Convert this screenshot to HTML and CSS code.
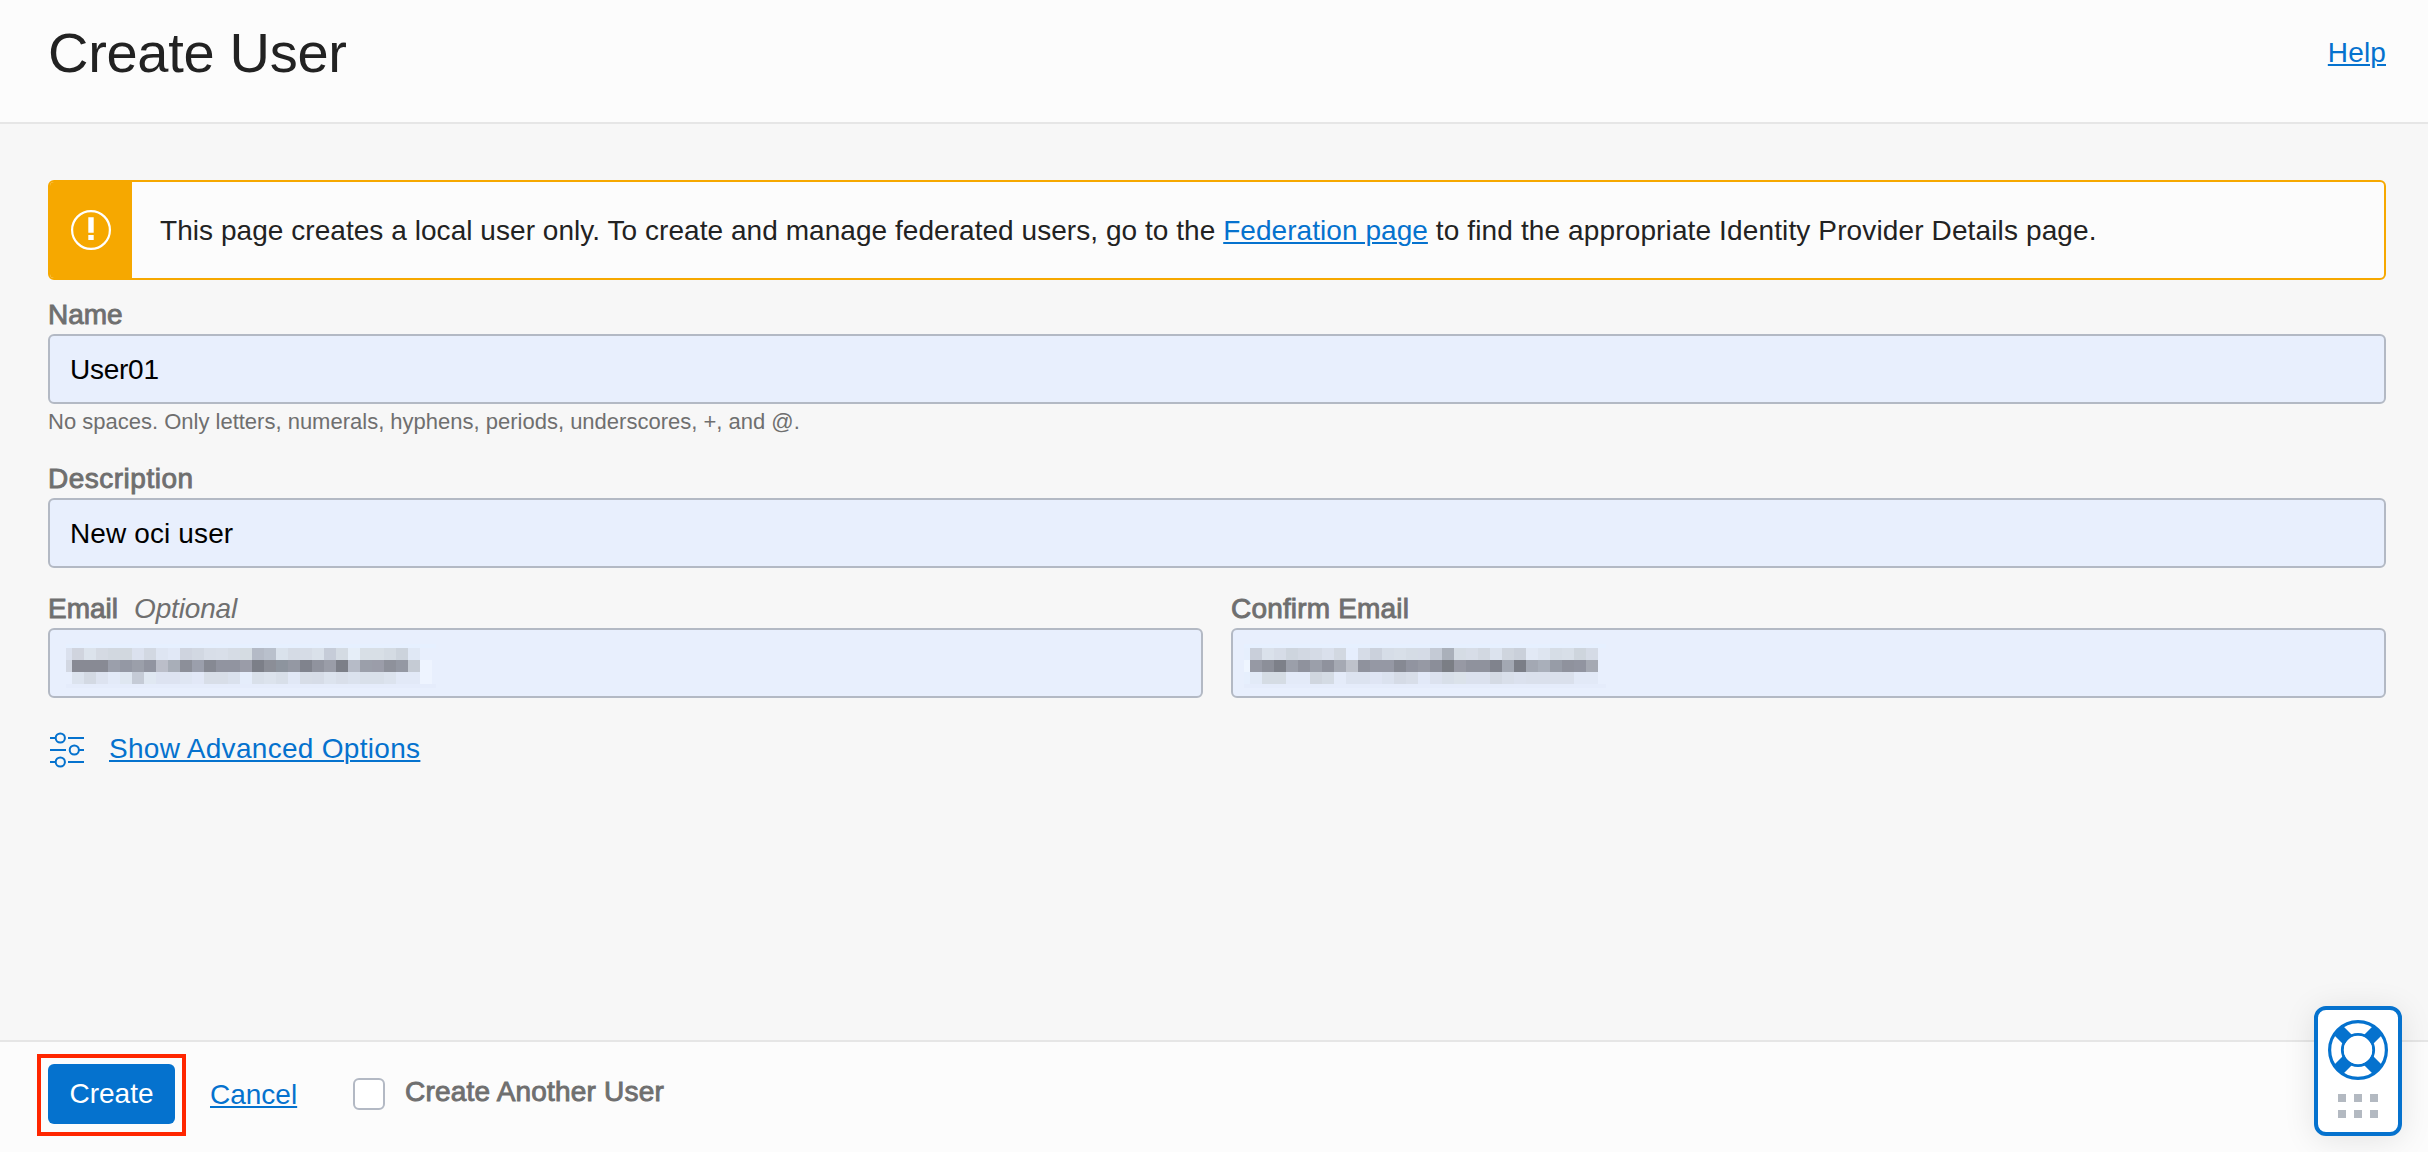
FILE: index.html
```html
<!DOCTYPE html>
<html lang="en">
<head>
<meta charset="utf-8">
<title>Create User</title>
<link rel="stylesheet" href="styles.css">
</head>
<body>
<div class="page">
  <header class="header">
    <h1 class="title">Create User</h1>
    <a class="link help-link" href="#">Help</a>
  </header>

  <main class="content">
    <div class="alert">
      <div class="alert-icon">
        <svg width="42" height="42" viewBox="0 0 42 42"><circle cx="21" cy="21" r="18.9" fill="none" stroke="#fff" stroke-width="2.2"/><path d="M18.300 8.300h5.400v15.400h-5.400zM18.300 26h5.400v5h-5.400z" fill="#fff"/></svg>
      </div>
      <p class="alert-text"><span class="alert-before">This page creates a local user only. To create and manage federated users, go to the </span><a class="link alert-link" href="#">Federation page</a><span class="alert-after"> to find the appropriate Identity Provider Details page.</span></p>
    </div>

    <div class="field">
      <label class="label"><span class="l-name">Name</span></label>
      <div class="input"><span class="v-name">User01</span></div>
      <p class="hint">No spaces. Only letters, numerals, hyphens, periods, underscores, +, and @.</p>
    </div>

    <div class="field field-description">
      <label class="label"><span class="l-desc">Description</span></label>
      <div class="input"><span class="v-desc">New oci user</span></div>
    </div>

    <div class="row">
      <div class="field">
        <label class="label"><span class="l-email">Email</span><em class="optional">Optional</em></label>
        <div class="input input-masked"><svg class="mask" width="370" height="44" data-mask="email"></svg></div>
      </div>
      <div class="field">
        <label class="label"><span class="l-confirm">Confirm Email</span></label>
        <div class="input input-masked confirm"><svg class="mask" width="362" height="44" data-mask="confirm"></svg></div>
      </div>
    </div>

    <div class="advanced">
      <svg width="36" height="36" viewBox="0 0 36 36" fill="none" stroke="#0572ce" stroke-width="2"><path d="M1 6h5M19 6h16M1 18h16M30 18h5M1 30h5M19 30h16"/><circle cx="11.3" cy="6" r="4.6"/><circle cx="25.3" cy="18" r="4.6"/><circle cx="11.3" cy="30" r="4.6"/></svg>
      <a class="link" href="#">Show Advanced Options</a>
    </div>
  </main>

  <footer class="footer">
    <div class="highlight"><button class="create">Create</button></div>
    <a class="link cancel" href="#">Cancel</a>
    <span class="checkbox"></span>
    <span class="another">Create Another User</span>
  </footer>
</div>

<div class="support">
  <svg width="60" height="60" viewBox="0 0 60 60">
    <g fill="none" stroke="#0572ce">
      <path d="M10.500 10.500L20 20M40 20L49.500 10.500M10.500 49.500L20 40M40 40L49.500 49.500" stroke-width="12.800"/>
      <circle cx="30" cy="30" r="28.400" stroke-width="3.200"/>
      <circle cx="30" cy="30" r="15.600" stroke-width="3"/>
    </g>
    <circle cx="30" cy="30" r="14.200" fill="#fff"/>
  </svg>
  <div class="dots"><i></i><i></i><i></i><i></i><i></i><i></i></div>
</div>
<script src="mask.js"></script>
</body>
</html>
```
FILE: styles.css
```css
* { box-sizing: border-box; }

body {
  margin: 0;
  font-family: "Liberation Sans", Arial, sans-serif;
  font-size: 28px;
  line-height: 32px;
  color: #222;
  background: #f7f7f7;
}

h1, p { margin: 0; font-weight: 400; }

.page { display: flex; flex-direction: column; height: 1152px; }

.header {
  display: flex;
  justify-content: space-between;
  height: 124px;
  padding: 0 42px 0 48px;
  background: #fcfcfc;
  border-bottom: 2px solid #e6e6e6;
}

.title { padding-top: 21px; font-size: 56px; line-height: 64px; letter-spacing: -0.3px; }

.link {
  color: #0572ce;
  text-decoration: underline;
  text-decoration-thickness: 2px;
  text-underline-offset: 2px;
}

.help-link { padding-top: 37px; letter-spacing: 0.15px; }

.content { flex: 1; padding: 56px 42px 0 48px; }

.alert {
  display: flex;
  height: 100px;
  border: 2px solid #f6a800;
  border-radius: 6px;
  background: #fcfcfc;
  overflow: hidden;
}

.alert-icon {
  display: flex;
  align-items: center;
  justify-content: center;
  width: 82px;
  background: #f6a800;
}

.alert-text { padding: 33px 0 0 28px; white-space: pre; }
.alert-before, .alert-link { letter-spacing: 0.05px; }
.alert-after { letter-spacing: 0.13px; }

.field { display: flex; flex-direction: column; }

.label {
  height: 54px;
  padding-top: 19px;
  color: #6f6f6f;
  white-space: nowrap;
}

.label > span, .another { -webkit-text-stroke: 0.9px #6f6f6f; }
.l-desc { letter-spacing: 0.5px; }
.l-confirm { letter-spacing: 0.18px; }

.optional { margin-left: 16px; letter-spacing: -0.15px; }

.input {
  display: flex;
  align-items: center;
  height: 70px;
  padding: 2px 0 0 20px;
  border: 2px solid #b3b9c4;
  border-radius: 6px;
  background: #e8effd;
  color: #000;
}

.v-name { letter-spacing: -0.25px; }
.v-desc { letter-spacing: 0.12px; }

.input-masked { padding-left: 16px; }
.confirm { padding-left: 11px; }

.mask { display: block; margin-top: 4px; }

.hint { padding-top: 5px; font-size: 22px; line-height: 25px; color: #6f6f6f; }

.field-description { margin-top: 10px; }

.row { display: grid; grid-template-columns: 1fr 1fr; gap: 28px; margin-top: 6px; }

.advanced { display: flex; align-items: center; gap: 24px; margin-top: 34px; padding-left: 1px; }
.advanced .link { margin-bottom: 2px; letter-spacing: 0.3px; }

.footer {
  display: flex;
  height: 112px;
  padding: 12px 0 0 37px;
  border-top: 2px solid #e6e6e6;
  background: #fcfcfc;
}

.highlight {
  display: flex;
  align-items: center;
  justify-content: center;
  width: 149px;
  height: 82px;
  padding-bottom: 2px;
  border: 4px solid #ff2600;
}

.create {
  width: 127px;
  height: 60px;
  padding: 0;
  border: 0;
  border-radius: 6px;
  background: #0572ce;
  color: #fff;
  font: inherit;
}

.cancel { width: 87px; margin: 25px 0 0 24px; }

.checkbox {
  width: 32px;
  height: 32px;
  margin: 24px 0 0 56px;
  border: 2px solid #b3b9c4;
  border-radius: 6px;
  background: #fff;
}

.another { margin: 22px 0 0 20px; color: #6f6f6f; letter-spacing: 0.2px; }

.support {
  position: absolute;
  left: 2314px;
  top: 1006px;
  width: 88px;
  height: 130px;
  padding-top: 10px;
  border: 4px solid #0572ce;
  border-radius: 12px;
  background: #fff;
  box-shadow: 0 4px 32px rgba(0, 0, 0, 0.1);
}

.support svg { display: block; margin: 0 auto; }

.dots { display: grid; grid-template-columns: repeat(3, 8px); gap: 8px; justify-content: center; margin-top: 14px; }
.dots i { height: 8px; background: #b3b9c1; }
```
FILE: mask.js
```js
// Tones of the redacted addresses: three rows of 12px blocks after a narrow lead-in.
const masks = {
  email: [
    "dbe1ee d0d4de dce3ec d5dae3 d2d8e0 d2d8df dbe1ee d2d8e2 dee5f2 e1e8f6 cfd4df d2d8e2 d8dee8 d9dfe9 d6dce5 d5dce2 b4bac6 b9c0cc dae2ec d5dbe5 d6dce6 dae1ea c6ccd8 d4dbe3 e6eef8 d8dfe6 d8dfe6 d4dbe3 ccd3dc e0e8f5",
    "d2d7e2 888a94 888a94 888a94 9b9fab 9498a4 9b9faa 9194a0 bbbec9 a8aeb8 8c8f99 9b9fac 868993 9194a0 9194a0 9a9ca8 7c7f88 8b8e97 8d949e 9498a3 80838d 90939e 9a9da8 7c7f88 b6bbc7 9b9faa 9b9da9 8e919b 9498a3 c5cbd4 eef4ff",
    "e8effd dce3ee d3d9e3 dde3f0 e3eaf8 dfe7f1 c5cbd6 e0e8f2 dde3f1 dde3f1 dfe6f3 e2e8f7 d8dee8 d8dee8 dae1ed e5edfb d9e0ea dce3ed d8dfe9 e1e8f6 d7dde7 d6dce7 dce3ee d9dfea dbe2ee d9e0ea d9e0ea dce3ee e2e9f7 e2e9f7 eef4ff"
  ],
  confirm: [
    "e6effd c9cfda dae1eb d6dce7 ced5de d2d8e2 d5dbe6 dae0ec d2d8e1 e6eefd d6dce7 cbd1dc d6dde7 d8dfe8 d5dce5 d5dbe6 c4cad5 aab0ba d5dce4 d7dde7 d2d8e1 dce3ee cfd5de cad0da e2e9f5 dee5f0 d6dde6 d8dfe8 ced5dd d5dbe6",
    "eef5ff 9699a4 8c8f99 7d8089 9b9faa 8f929d 9b9faa 8f929d a5a9b3 bec2cb 8f929d 9598a4 9598a4 868993 9194a0 9699a4 8b8e99 7b7e85 9799a4 8f929d 8f929d 80838d a3a8b3 7b7e87 a3a8b3 a9afba 979ca7 8f929d 9194a0 a5a9b3",
    "e6effd e2eaf7 d5dce4 d5dce4 e3eaf8 e3eaf8 d0d6df d4dbe4 e4ebf9 dce3f0 dce3f0 dfe5f4 dbe2ef d5dbe6 d8dee9 e2e9f8 dce2ef d8dfe9 dbe2ea dbe1ee dbe1ee d4dae4 d9dfea dbe1ee dae0ec dae0ec dae0ec dae0ec e2e9f7 e2e9f7"
  ]
};

document.querySelectorAll("[data-mask]").forEach((svg) => {
  const block = (x, y, w, h, fill) => {
    const rect = document.createElementNS("http://www.w3.org/2000/svg", "rect");
    Object.entries({ x, y, width: w, height: h, fill }).forEach(([k, v]) => rect.setAttribute(k, v));
    svg.appendChild(rect);
  };
  block(0, 0, 370, 4, "#e6f0ff");
  block(0, 40, 370, 4, "#e5ecfb");
  masks[svg.dataset.mask].forEach((row, r) => {
    row.split(" ").forEach((tone, i) => {
      block(i ? 12 * i - 6 : 0, 4 + r * 12, i ? 12 : 6, 12, "#" + tone);
    });
  });
});
```
